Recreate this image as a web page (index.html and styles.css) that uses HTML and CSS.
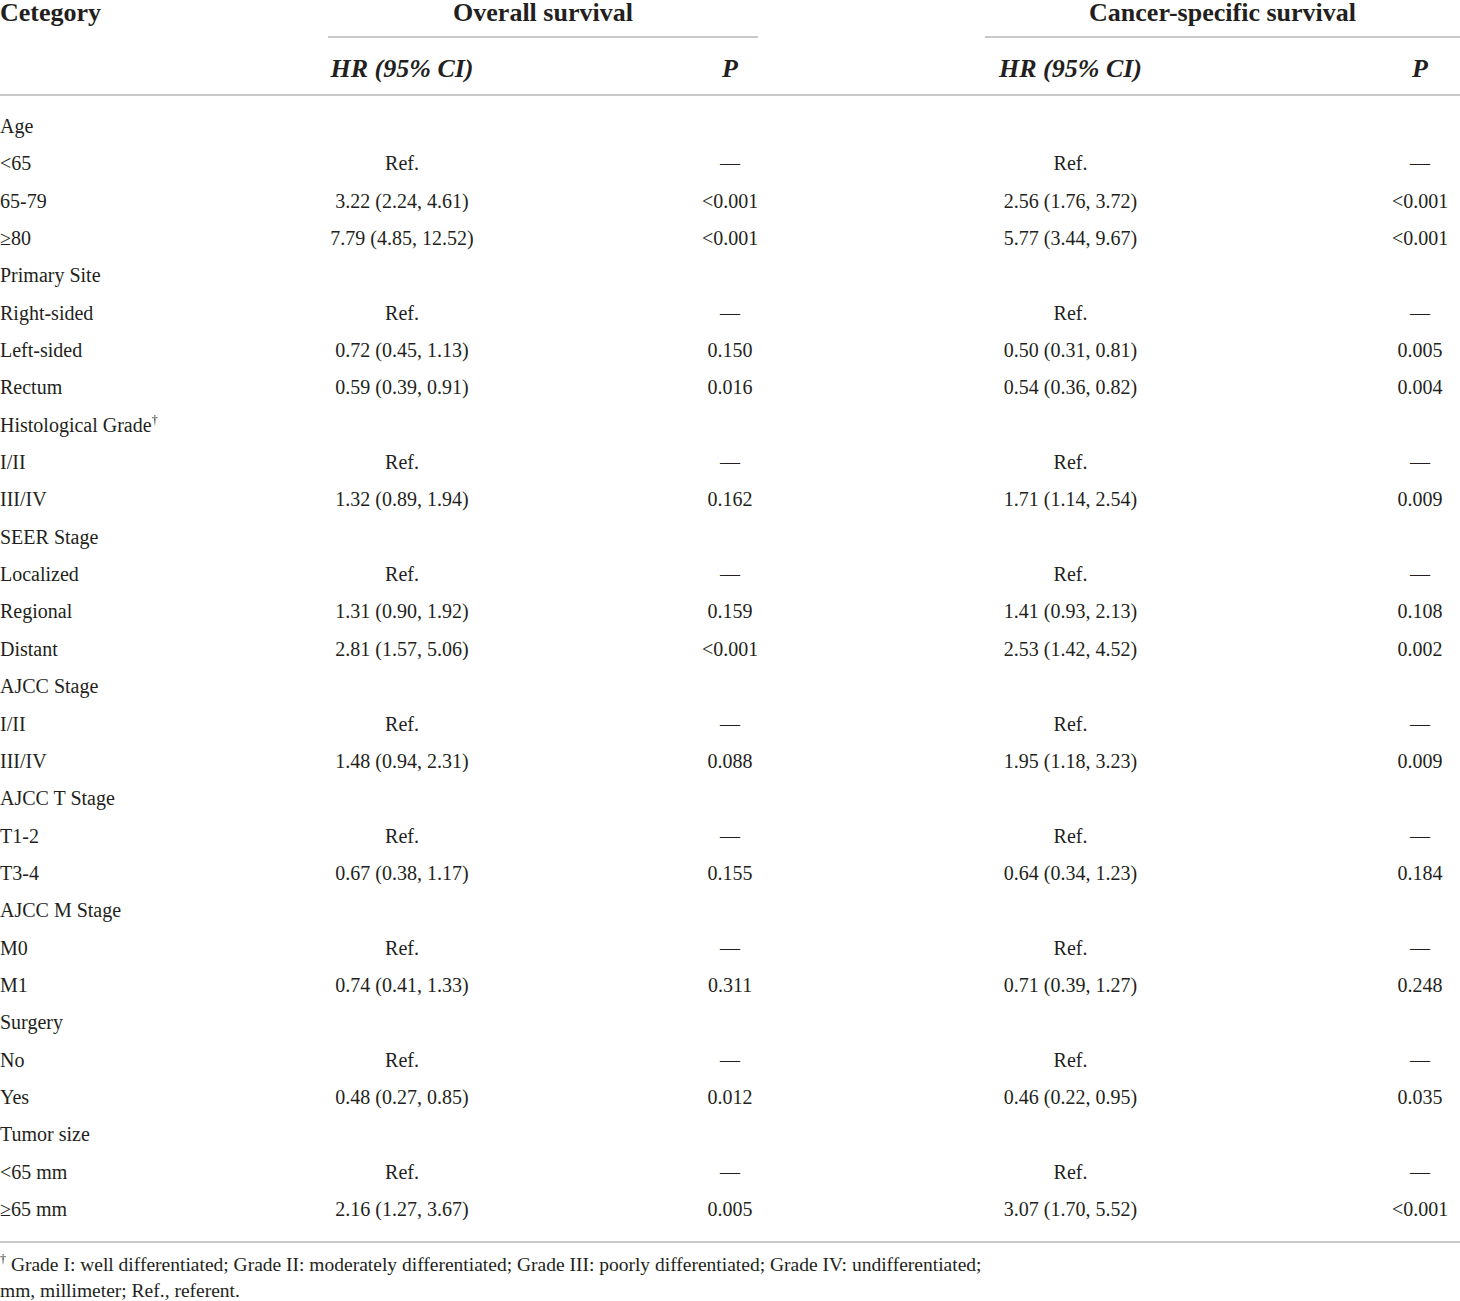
FILE: index.html
```html
<!DOCTYPE html>
<html lang="en">
<head>
<meta charset="utf-8">
<title>Multivariate analysis</title>
<link rel="stylesheet" href="styles.css">
</head>
<body>
<table class="tbl">
  <colgroup>
    <col class="c-cat"><col class="c-hr"><col class="c-p"><col class="c-hr2"><col class="c-p2">
  </colgroup>
  <thead>
    <tr class="h1">
      <th class="cat-head">Cetegory</th>
      <th colspan="2" class="grp"><div class="grp-title">Overall survival</div></th>
      <th colspan="2" class="grp grp2"><div class="grp-title">Cancer-specific survival</div></th>
    </tr>
    <tr class="h2">
      <th></th>
      <th class="hr"><em>HR (95% CI)</em></th>
      <th class="p"><em>P</em></th>
      <th class="hr2"><em>HR (95% CI)</em></th>
      <th class="p2"><em>P</em></th>
    </tr>
  </thead>
  <tbody>
    <tr><td>Age</td><td></td><td class="p"></td><td class="hr2"></td><td class="p2"></td></tr>
    <tr><td>&lt;65</td><td class="hr">Ref.</td><td class="p">—</td><td class="hr2">Ref.</td><td class="p2">—</td></tr>
    <tr><td>65-79</td><td class="hr">3.22 (2.24, 4.61)</td><td class="p">&lt;0.001</td><td class="hr2">2.56 (1.76, 3.72)</td><td class="p2">&lt;0.001</td></tr>
    <tr><td>≥80</td><td class="hr">7.79 (4.85, 12.52)</td><td class="p">&lt;0.001</td><td class="hr2">5.77 (3.44, 9.67)</td><td class="p2">&lt;0.001</td></tr>
    <tr><td>Primary Site</td><td></td><td class="p"></td><td class="hr2"></td><td class="p2"></td></tr>
    <tr><td>Right-sided</td><td class="hr">Ref.</td><td class="p">—</td><td class="hr2">Ref.</td><td class="p2">—</td></tr>
    <tr><td>Left-sided</td><td class="hr">0.72 (0.45, 1.13)</td><td class="p">0.150</td><td class="hr2">0.50 (0.31, 0.81)</td><td class="p2">0.005</td></tr>
    <tr><td>Rectum</td><td class="hr">0.59 (0.39, 0.91)</td><td class="p">0.016</td><td class="hr2">0.54 (0.36, 0.82)</td><td class="p2">0.004</td></tr>
    <tr><td>Histological Grade<sup class="dag">†</sup></td><td></td><td class="p"></td><td class="hr2"></td><td class="p2"></td></tr>
    <tr><td>I/II</td><td class="hr">Ref.</td><td class="p">—</td><td class="hr2">Ref.</td><td class="p2">—</td></tr>
    <tr><td>III/IV</td><td class="hr">1.32 (0.89, 1.94)</td><td class="p">0.162</td><td class="hr2">1.71 (1.14, 2.54)</td><td class="p2">0.009</td></tr>
    <tr><td>SEER Stage</td><td></td><td class="p"></td><td class="hr2"></td><td class="p2"></td></tr>
    <tr><td>Localized</td><td class="hr">Ref.</td><td class="p">—</td><td class="hr2">Ref.</td><td class="p2">—</td></tr>
    <tr><td>Regional</td><td class="hr">1.31 (0.90, 1.92)</td><td class="p">0.159</td><td class="hr2">1.41 (0.93, 2.13)</td><td class="p2">0.108</td></tr>
    <tr><td>Distant</td><td class="hr">2.81 (1.57, 5.06)</td><td class="p">&lt;0.001</td><td class="hr2">2.53 (1.42, 4.52)</td><td class="p2">0.002</td></tr>
    <tr><td>AJCC Stage</td><td></td><td class="p"></td><td class="hr2"></td><td class="p2"></td></tr>
    <tr><td>I/II</td><td class="hr">Ref.</td><td class="p">—</td><td class="hr2">Ref.</td><td class="p2">—</td></tr>
    <tr><td>III/IV</td><td class="hr">1.48 (0.94, 2.31)</td><td class="p">0.088</td><td class="hr2">1.95 (1.18, 3.23)</td><td class="p2">0.009</td></tr>
    <tr><td>AJCC T Stage</td><td></td><td class="p"></td><td class="hr2"></td><td class="p2"></td></tr>
    <tr><td>T1-2</td><td class="hr">Ref.</td><td class="p">—</td><td class="hr2">Ref.</td><td class="p2">—</td></tr>
    <tr><td>T3-4</td><td class="hr">0.67 (0.38, 1.17)</td><td class="p">0.155</td><td class="hr2">0.64 (0.34, 1.23)</td><td class="p2">0.184</td></tr>
    <tr><td>AJCC M Stage</td><td></td><td class="p"></td><td class="hr2"></td><td class="p2"></td></tr>
    <tr><td>M0</td><td class="hr">Ref.</td><td class="p">—</td><td class="hr2">Ref.</td><td class="p2">—</td></tr>
    <tr><td>M1</td><td class="hr">0.74 (0.41, 1.33)</td><td class="p">0.311</td><td class="hr2">0.71 (0.39, 1.27)</td><td class="p2">0.248</td></tr>
    <tr><td>Surgery</td><td></td><td class="p"></td><td class="hr2"></td><td class="p2"></td></tr>
    <tr><td>No</td><td class="hr">Ref.</td><td class="p">—</td><td class="hr2">Ref.</td><td class="p2">—</td></tr>
    <tr><td>Yes</td><td class="hr">0.48 (0.27, 0.85)</td><td class="p">0.012</td><td class="hr2">0.46 (0.22, 0.95)</td><td class="p2">0.035</td></tr>
    <tr><td>Tumor size</td><td></td><td class="p"></td><td class="hr2"></td><td class="p2"></td></tr>
    <tr><td>&lt;65 mm</td><td class="hr">Ref.</td><td class="p">—</td><td class="hr2">Ref.</td><td class="p2">—</td></tr>
    <tr><td>≥65 mm</td><td class="hr">2.16 (1.27, 3.67)</td><td class="p">0.005</td><td class="hr2">3.07 (1.70, 5.52)</td><td class="p2">&lt;0.001</td></tr>
  </tbody>
</table>
<div class="notes">
  <p><sup class="ndag">†</sup> Grade I: well differentiated; Grade II: moderately differentiated; Grade III: poorly differentiated; Grade IV: undifferentiated;<br>mm, millimeter; Ref., referent.</p>
</div>
</body>
</html>
```

FILE: styles.css
```css
html, body {
  margin: 0;
  padding: 0;
  background: #ffffff;
}
body {
  font-family: "Liberation Serif", "Times New Roman", serif;
  color: #231f20;
  width: 1460px;
}
.tbl {
  width: 1460px;
  border-collapse: collapse;
  table-layout: fixed;
  font-size: 20px;
}
.c-cat { width: 328px; }
.c-hr { width: 148px; }
.c-p { width: 282px; }
.c-hr2 { width: 398px; }
.c-p2 { width: 304px; }

.tbl th, .tbl td {
  padding: 0;
  white-space: nowrap;
}
.h1 th {
  font-size: 26px;
  font-weight: bold;
  line-height: 26px;
  vertical-align: top;
  text-align: center;
}
.h1 .cat-head {
  text-align: left;
}
.grp-title {
  padding-bottom: 10px;
  border-bottom: 2px solid #c9c9c9;
}
.tbl th.grp2 {
  padding-left: 227px;
}
.tbl .h2 th {
  font-size: 26px;
  font-weight: bold;
  height: 50px;
  line-height: 30px;
  vertical-align: middle;
  border-bottom: 2px solid #c9c9c9;
  padding-top: 6px;
}
.h2 th em {
  font-style: italic;
}
.tbl td {
  line-height: 37.35px;
  height: 37.35px;
  vertical-align: middle;
}
.tbl .hr { text-align: center; }
.tbl .p { text-align: center; padding-left: 226px; }
.tbl .hr2 { text-align: center; padding-left: 227px; }
.tbl .p2 { text-align: center; padding-left: 236px; padding-right: 12px; }

.tbl tbody tr:first-child td {
  padding-top: 12px;
}
.tbl tbody tr:last-child td {
  padding-bottom: 13px;
}
.tbl tbody {
  border-bottom: 2px solid #c9c9c9;
}
.dag {
  font-size: 12px;
  line-height: 0;
  vertical-align: 8px;
}
.notes {
  font-size: 19.5px;
  line-height: 26px;
  padding-top: 9px;
}
.notes p {
  margin: 0;
}
.ndag {
  font-size: 12px;
  line-height: 0;
  vertical-align: 8px;
}
```
